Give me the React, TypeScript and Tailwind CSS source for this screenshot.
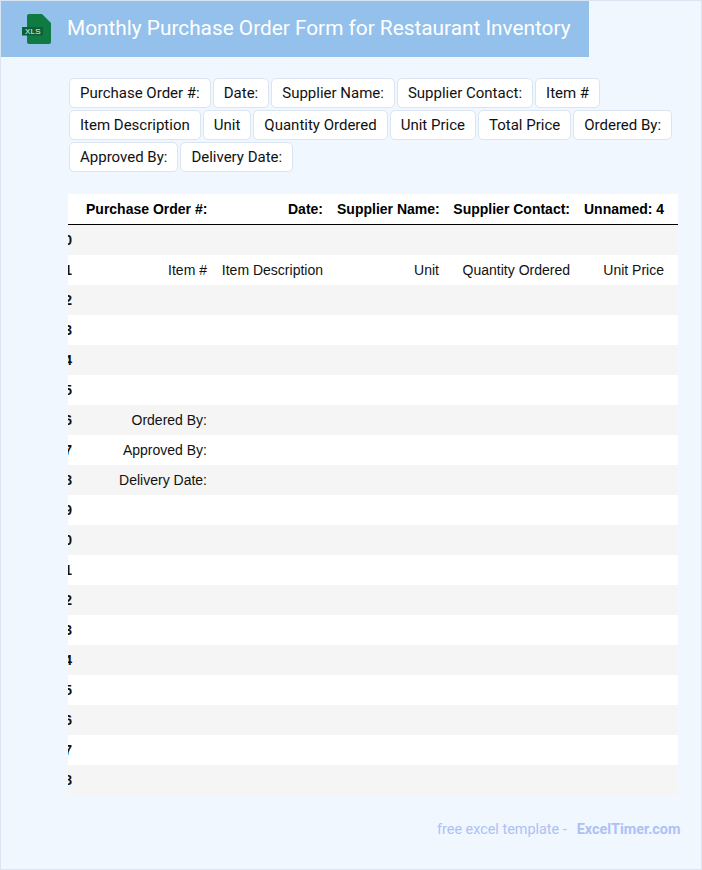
import React from "react";

const tags = [
  "Purchase Order #:", "Date:", "Supplier Name:", "Supplier Contact:", "Item #",
  "Item Description", "Unit", "Quantity Ordered", "Unit Price", "Total Price", "Ordered By:",
  "Approved By:", "Delivery Date:",
];

const rows: Record<number, string[]> = {
  1: ["Item #", "Item Description", "Unit", "Quantity Ordered", "Unit Price"],
  6: ["Ordered By:"],
  7: ["Approved By:"],
  8: ["Delivery Date:"],
};

const header = ["Purchase Order #:", "Date:", "Supplier Name:", "Supplier Contact:", "Unnamed: 4"];

function XlsIcon() {
  return (
    <svg width="30" height="32" viewBox="0 0 30 32" className="shrink-0">
      <path d="M5 3a2 2 0 0 1 2-2h13l9 9v19a2 2 0 0 1-2 2H7a2 2 0 0 1-2-2z" fill="#107a43" />
      <rect x="0" y="14" width="21" height="8.5" fill="#0c5f36" />
      <text x="11" y="21" textAnchor="middle" fontSize="8" fill="#e8f5ee" letterSpacing="0.3" fontFamily="'Liberation Sans', sans-serif">XLS</text>
    </svg>
  );
}

export default function App() {
  return (
    <div className="w-[702px] h-[870px] bg-[#f0f7ff] border border-[#dbe5f1] font-['Roboto',sans-serif] flex flex-col">
      <div className="w-[588px] h-[56px] bg-[#93c1ec] flex items-center pl-[21px] gap-[15px]">
        <XlsIcon />
        <h1 className="text-[20.8px] font-normal text-white whitespace-nowrap">Monthly Purchase Order Form for Restaurant Inventory</h1>
      </div>

      <div className="ml-[68px] mt-[21px] w-[610px] flex flex-wrap gap-[2px]">
        {tags.map((t) => (
          <span key={t} className="h-[30px] px-[10px] flex items-center bg-white border border-[#dbe5f1] rounded-[5px] text-[15px] text-[#111] whitespace-nowrap">
            {t}
          </span>
        ))}
      </div>

      <div className="ml-[67px] mt-[22px] w-[610px] overflow-hidden bg-white font-['Liberation_Sans',sans-serif] text-[14px] text-[#111]">
        <table className="-ml-[29px] w-[692px] table-fixed border-separate border-spacing-0">
          <colgroup>
            <col className="w-[40px]" />
            <col className="w-[135px]" />
            <col className="w-[116px]" />
            <col className="w-[116px]" />
            <col className="w-[131px]" />
            <col className="w-[94px]" />
            <col className="w-[60px]" />
          </colgroup>
          <thead>
            <tr className="h-[31px]">
              <th className="px-[7px] border-b border-black"></th>
              {header.map((h) => (
                <th key={h} className="px-[7px] text-right font-bold whitespace-nowrap border-b border-black text-black">{h}</th>
              ))}
              <th className="border-b border-black"></th>
            </tr>
          </thead>
          <tbody>
            {Array.from({ length: 19 }, (_, i) => (
              <tr key={i} className={i % 2 === 0 ? "h-[30px] bg-[#f5f5f5]" : "h-[30px] bg-white"}>
                <th className="px-[7px] text-right font-bold">{i}</th>
                {[0, 1, 2, 3, 4].map((c) => (
                  <td key={c} className="px-[7px] text-right whitespace-nowrap">{rows[i]?.[c] ?? ""}</td>
                ))}
                <td></td>
              </tr>
            ))}
          </tbody>
        </table>
      </div>

      <div className="ml-[436px] mt-[24px] whitespace-nowrap text-[14.4px] text-[#adc1f5] flex">
        <span>free excel template -</span>
        <span className="ml-[10px] font-bold">ExcelTimer.com</span>
      </div>
    </div>
  );
}
